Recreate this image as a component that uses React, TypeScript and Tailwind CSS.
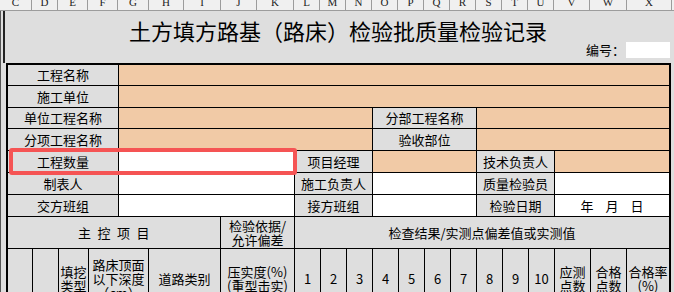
import React from 'react';

const letters: [string, number][] = [
  ['C', 32], ['D', 26], ['E', 30], ['F', 30], ['G', 31], ['H', 35], ['I', 37], ['J', 36], ['K', 37],
  ['L', 26], ['M', 26], ['N', 26], ['O', 26], ['P', 26], ['Q', 26], ['R', 26], ['S', 26], ['T', 26], ['U', 26],
  ['V', 36], ['W', 37], ['X', 45],
];

const spanCls: Record<number, string> = {
  1: 'col-span-1',
  2: 'col-span-2',
  3: 'col-span-3',
  4: 'col-span-4',
  6: 'col-span-6',
  13: 'col-span-13',
  16: 'col-span-16',
};

const bgCls = {
  gray: 'bg-[#dedede]',
  peach: 'bg-[#f1caa6]',
  white: 'bg-white',
};

type Bg = keyof typeof bgCls;

interface CellProps {
  span?: number;
  bg?: Bg;
  last?: boolean;
  className?: string;
  children?: React.ReactNode;
}

const Cell: React.FC<CellProps> = ({ span = 1, bg = 'gray', last = false, className = '', children }) => (
  <div
    className={`${spanCls[span]} ${bgCls[bg]} ${last ? 'border-r-2' : 'border-r'} border-b border-black flex items-center justify-center text-center overflow-hidden ${className}`}
  >
    {children}
  </div>
);

export default function App() {
  return (
    <div className="w-[674px] h-[292px] overflow-hidden bg-[#dedede] text-black font-['Noto_Sans_CJK_SC',sans-serif]">
      {/* column letters */}
      <div className="flex h-[11px] bg-[#f0f0f0] border-b border-[#9c9c9c] overflow-hidden">
        {letters.map(([l, w]) => (
          <div
            key={l}
            style={{ width: w }}
            className="shrink-0 border-r border-[#9c9c9c] flex justify-center overflow-hidden"
          >
            <span className="-mt-[4px] text-[11px] leading-[12px] text-[#222] font-['Liberation_Serif',serif]">{l}</span>
          </div>
        ))}
      </div>

      <div className="flex">
        <div className="w-[3px] shrink-0 border-l border-[#555] self-stretch h-[281px]" />
        <div className="flex-1">
          {/* title */}
          <div className="h-[52px] border-l-2 border-[#222] flex flex-col">
            <div className="pt-[7px] h-[31px] text-[22px] leading-[24px] text-center pr-[3px]">
              土方填方路基（路床）检验批质量检验记录
            </div>
            <div className="flex justify-end items-center h-[16px] pr-[4px] text-[13px]">
              <span className="mr-[1px]">编号：</span>
              <div className="w-[44px] h-[16px] bg-white" />
            </div>
          </div>

          {/* form table */}
          <div className="relative ml-[3px] w-[665px] border-l-2 border-t-2 border-black grid grid-cols-[25px_26px_30px_30px_30px_72px_74px_26px_26px_26px_26px_26px_26px_26px_26px_26px_26px_36px_36px_44px] grid-rows-[21px_22px_21px_22px_22px_22px_22px_32px_60px] text-[13px] leading-[14px]">
            <Cell span={4}>工程名称</Cell>
            <Cell span={16} bg="peach" last />

            <Cell span={4}>施工单位</Cell>
            <Cell span={16} bg="peach" last />

            <Cell span={4}>单位工程名称</Cell>
            <Cell span={6} bg="peach" />
            <Cell span={4}>分部工程名称</Cell>
            <Cell span={6} bg="peach" last />

            <Cell span={4}>分项工程名称</Cell>
            <Cell span={6} bg="peach" />
            <Cell span={4}>验收部位</Cell>
            <Cell span={6} bg="peach" last />

            <Cell span={4}>工程数量</Cell>
            <Cell span={3} bg="white" />
            <Cell span={3}>项目经理</Cell>
            <Cell span={4} bg="peach" />
            <Cell span={3}>技术负责人</Cell>
            <Cell span={3} bg="peach" last />

            <Cell span={4}>制表人</Cell>
            <Cell span={3} bg="white" />
            <Cell span={3}>施工负责人</Cell>
            <Cell span={4} bg="white" />
            <Cell span={3}>质量检验员</Cell>
            <Cell span={3} bg="white" last />

            <Cell span={4}>交方班组</Cell>
            <Cell span={3} bg="white" />
            <Cell span={3}>接方班组</Cell>
            <Cell span={4} bg="white" />
            <Cell span={3}>检验日期</Cell>
            <Cell span={3} bg="white" last className="gap-3">
              <span>年</span>
              <span>月</span>
              <span>日</span>
            </Cell>

            <Cell span={6} className="tracking-[0.5em] pl-[6px]">主控项目</Cell>
            <Cell>
              检验依据/
              <br />
              允许偏差
            </Cell>
            <Cell span={13} last>检查结果/实测点偏差值或实测值</Cell>

            <Cell />
            <Cell />
            <Cell>填挖类型</Cell>
            <Cell span={2}>路床顶面以下深度（cm）</Cell>
            <Cell>道路类别</Cell>
            <Cell>
              压实度(%)
              <br />
              (重型击实)
            </Cell>
            {[1, 2, 3, 4, 5, 6, 7, 8, 9, 10].map((n) => (
              <Cell key={n}>{n}</Cell>
            ))}
            <Cell className="px-[3px]">应测点数</Cell>
            <Cell className="px-[3px]">合格点数</Cell>
            <Cell last>
              合格率
              <br />
              (%)
            </Cell>

            {/* highlight around 工程数量 row */}
            <div className="absolute left-[1px] top-[83px] w-[288px] h-[27px] border-[4px] border-[#f55454] rounded-[3px] pointer-events-none" />
          </div>
        </div>
      </div>
    </div>
  );
}
